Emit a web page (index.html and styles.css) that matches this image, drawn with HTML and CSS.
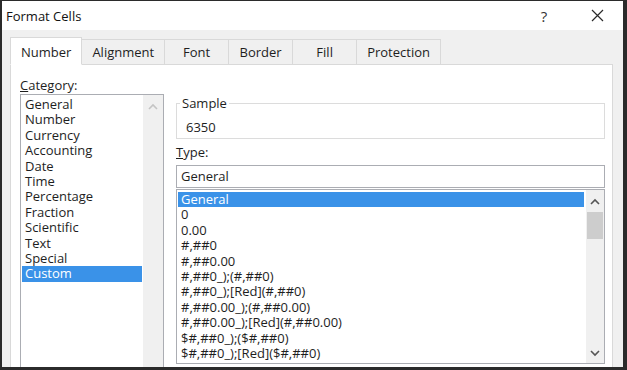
FILE: index.html
```html
<!DOCTYPE html>
<html lang="en">
<head>
  <meta charset="UTF-8">
  <title>Format Cells</title>
  <link rel="stylesheet" href="styles.css">
</head>
<body>

  <div class="window">
    <div class="titlebar">
      <span class="title">Format Cells</span>
      <div class="title-buttons">
        <span class="tbtn help">?</span>
        <span class="tbtn close">
          <svg width="13" height="13" viewBox="0 0 13 13"><path d="M1 1 L12 12 M12 1 L1 12" stroke="#2a2a2a" stroke-width="1.2" fill="none"/></svg>
        </span>
      </div>
    </div>

    <div class="tabs">
      <div class="tab active">Number</div>
      <div class="tab">Alignment</div>
      <div class="tab">Font</div>
      <div class="tab">Border</div>
      <div class="tab">Fill</div>
      <div class="tab">Protection</div>
    </div>

    <div class="panel">
      <!-- 左侧：分类 -->
      <div class="col-left">
        <div class="label"><u>C</u>ategory:</div>
        <div class="listbox cat-list">
          <ul class="items">
            <li>General</li>
            <li>Number</li>
            <li>Currency</li>
            <li>Accounting</li>
            <li>Date</li>
            <li>Time</li>
            <li>Percentage</li>
            <li>Fraction</li>
            <li>Scientific</li>
            <li>Text</li>
            <li>Special</li>
            <li class="selected">Custom</li>
          </ul>
          <div class="scrollbar disabled">
            <div class="arrow up">
              <svg width="10" height="7" viewBox="0 0 10 7"><polyline points="1,6 5,2 9,6" fill="none" stroke="#c4c4c4" stroke-width="1.6"/></svg>
            </div>
          </div>
        </div>
      </div>

      <!-- 右侧：示例与类型 -->
      <div class="col-right">
        <fieldset class="sample">
          <legend>Sample</legend>
          <div class="sample-value">6350</div>
        </fieldset>

        <div class="label type-label"><u>T</u>ype:</div>
        <div class="type-input">General</div>

        <div class="listbox type-list">
          <ul class="items">
            <li class="selected">General</li>
            <li>0</li>
            <li>0.00</li>
            <li>#,##0</li>
            <li>#,##0.00</li>
            <li>#,##0_);(#,##0)</li>
            <li>#,##0_);[Red](#,##0)</li>
            <li>#,##0.00_);(#,##0.00)</li>
            <li>#,##0.00_);[Red](#,##0.00)</li>
            <li>$#,##0_);($#,##0)</li>
            <li>$#,##0_);[Red]($#,##0)</li>
          </ul>
          <div class="scrollbar">
            <div class="arrow up">
              <svg width="10" height="7" viewBox="0 0 10 7"><polyline points="1,6 5,2 9,6" fill="none" stroke="#555" stroke-width="1.6"/></svg>
            </div>
            <div class="thumb"></div>
            <div class="track"></div>
            <div class="arrow down">
              <svg width="10" height="7" viewBox="0 0 10 7"><polyline points="1,1 5,5 9,1" fill="none" stroke="#555" stroke-width="1.6"/></svg>
            </div>
          </div>
        </div>
      </div>
    </div>
  </div>

</body>
</html>
```

FILE: styles.css
```css
body {
  margin: 0;
  font-family: "Open Sans", "Noto Sans", Arial, sans-serif;
  font-size: 13px;
  color: #1e1e1e;
  background: #2b2b2b;
}
.window {
  width: 627px;
  height: 370px;
  box-sizing: border-box;
  border-style: solid;
  border-color: #2b2b2b;
  border-width: 1px 4px 3px 2px;
  background: #f0f0f0;
  overflow: hidden;
  display: flex;
  flex-direction: column;
}
.titlebar {
  height: 29px;
  flex: none;
  background: #fff;
  display: flex;
  align-items: center;
  justify-content: space-between;
  padding-left: 4px;
}
.title {
  color: #111;
}
.title-buttons {
  display: flex;
  gap: 7px;
  margin-right: 3px;
}
.tbtn {
  width: 46px;
  height: 29px;
  display: flex;
  align-items: center;
  justify-content: center;
}
.help {
  font-size: 15px;
  color: #333;
}
.tabs {
  display: flex;
  align-items: flex-end;
  margin: 7px 0 -1px 8px;
  flex: none;
}
.tab {
  min-width: 43px;
  height: 24px;
  line-height: 24px;
  padding: 0 10px;
  text-align: center;
  border: 1px solid #d9d9d9;
  border-left: none;
  background: #f0f0f0;
}
.tab.active {
  height: 24px;
  padding-top: 2px;
  background: #fff;
  border-left: 1px solid #d9d9d9;
  border-bottom-color: #fff;
  position: relative;
  z-index: 1;
}
.panel {
  flex: none;
  height: 330px;
  margin: 0 10px 0 8px;
  background: #fff;
  border: 1px solid #d9d9d9;
  padding: 12px 7px 0 9px;
  display: flex;
  gap: 12px;
}
.col-left {
  width: 144px;
  flex: none;
}
.col-right {
  flex: 1;
  margin-top: 18px;
}
.label {
  line-height: 16px;
  margin-bottom: 1px;
}
.listbox {
  display: flex;
  border: 1px solid #abadb3;
  background: #fff;
}
.cat-list {
  height: 300px;
}
.items {
  list-style: none;
  margin: 0;
  padding: 2px 1px;
  flex: 1;
}
.items li {
  line-height: 15.4px;
  padding-left: 3px;
  white-space: nowrap;
}
.items li.selected {
  background: #3a92e8;
  color: #fff;
}
.scrollbar {
  width: 18px;
  background: #f0f0f0;
  display: flex;
  flex-direction: column;
}
.cat-list .scrollbar {
  width: 20px;
}
.arrow {
  height: 22px;
  display: flex;
  align-items: center;
  justify-content: center;
  flex: none;
}
.arrow.down {
  height: 20px;
}
.thumb {
  height: 27px;
  margin: 0 1px;
  background: #cdcdcd;
  flex: none;
}
.track {
  flex: 1;
}
.sample {
  margin: 0;
  padding: 8px 8px 3px 3px;
  border: 1px solid #dcdcdc;
}
.sample legend {
  padding: 0 2px;
  line-height: 16px;
}
.sample-value {
  line-height: 16px;
  margin-left: 6px;
}
.type-label {
  margin-top: 5px;
  margin-bottom: 5px;
}
.type-input {
  border: 1px solid #abadb3;
  line-height: 21px;
  padding-left: 4px;
}
.type-list {
  margin-top: 1px;
  height: 173px;
}
.type-list .items {
  padding: 2px 2px 0 1px;
}
```
